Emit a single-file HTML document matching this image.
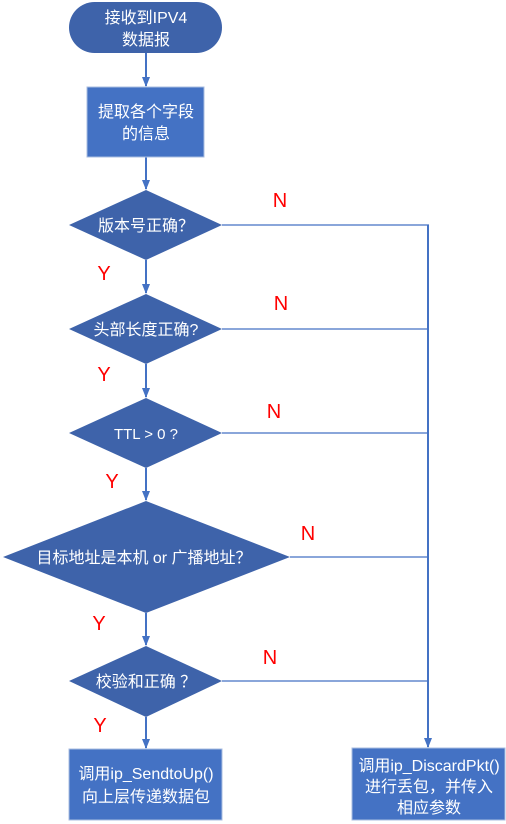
<!DOCTYPE html>
<html><head><meta charset="utf-8"><style>
html,body{margin:0;padding:0;background:#fff;width:506px;height:824px;overflow:hidden}
svg text{font-family:"Liberation Sans","Noto Sans CJK SC",sans-serif}
</style></head><body>
<svg width="506" height="824" viewBox="0 0 506 824" xmlns="http://www.w3.org/2000/svg">
<defs><marker id="a" markerWidth="10" markerHeight="8" refX="9" refY="4" orient="auto" markerUnits="userSpaceOnUse"><path d="M0,0 L10,4 L0,8 Z" fill="#4472C4"/></marker></defs>
<g stroke="#4472C4" stroke-width="2" fill="none">
<line x1="146" y1="53" x2="146" y2="86" marker-end="url(#a)"/>
<line x1="146" y1="157" x2="146" y2="189" marker-end="url(#a)"/>
<line x1="146" y1="260" x2="146" y2="293" marker-end="url(#a)"/>
<line x1="146" y1="364" x2="146" y2="397" marker-end="url(#a)"/>
<line x1="146" y1="468" x2="146" y2="500" marker-end="url(#a)"/>
<line x1="146" y1="613" x2="146" y2="645" marker-end="url(#a)"/>
<line x1="146" y1="717" x2="146" y2="748" marker-end="url(#a)"/>
<line x1="428" y1="225" x2="428" y2="747" marker-end="url(#a)"/>
</g>
<g stroke="#4472C4" stroke-width="1.2">
<line x1="222" y1="225" x2="429" y2="225"/>
<line x1="222" y1="329" x2="429" y2="329"/>
<line x1="222" y1="433" x2="429" y2="433"/>
<line x1="290" y1="557" x2="429" y2="557"/>
<line x1="222" y1="681" x2="429" y2="681"/>
</g>
<rect x="69" y="2" width="153" height="51" rx="25.5" fill="#3E63AA"/>
<rect x="87" y="87" width="117" height="70" fill="#4472C4" stroke="#a9bde0" stroke-width="1"/>
<g fill="#3E63AA">
<polygon points="69,225 146,190 222,225 146,260"/>
<polygon points="69,329 146,294 222,329 146,364"/>
<polygon points="69,433 146,398 222,433 146,468"/>
<polygon points="3,557 146,501 290,557 146,613"/>
<polygon points="69,681 146,646 222,681 146,717"/>
</g>
<rect x="69" y="749" width="153" height="71" fill="#4472C4" stroke="#a9bde0" stroke-width="1"/>
<rect x="352" y="748" width="153" height="72" fill="#4472C4" stroke="#a9bde0" stroke-width="1"/>
<g fill="#fff" font-size="16" text-anchor="middle">
<text x="146" y="23">接收到IPV4</text>
<text x="146" y="45">数据报</text>
<text x="146" y="117">提取各个字段</text>
<text x="146" y="139">的信息</text>
<text x="146" y="231">版本号正确？</text>
<text x="146" y="335">头部长度正确?</text>
<text x="146" y="439" font-size="15">TTL &gt; 0 ?</text>
<text x="144" y="563">目标地址是本机 or 广播地址？</text>
<text x="146" y="687">校验和正确 ？</text>
<text x="146" y="779">调用ip_SendtoUp()</text>
<text x="146" y="802">向上层传递数据包</text>
<text x="429" y="771">调用ip_DiscardPkt()</text>
<text x="429" y="792">进行丢包，并传入</text>
<text x="429" y="813">相应参数</text>
</g>
<g fill="#FF0000" font-size="20" text-anchor="middle">
<text x="280" y="207">N</text>
<text x="281" y="310">N</text>
<text x="274" y="418">N</text>
<text x="308" y="540">N</text>
<text x="270" y="664">N</text>
<text x="104" y="280">Y</text>
<text x="104" y="381">Y</text>
<text x="112" y="488">Y</text>
<text x="99" y="630">Y</text>
<text x="100" y="732">Y</text>
</g>
</svg>
</body></html>
